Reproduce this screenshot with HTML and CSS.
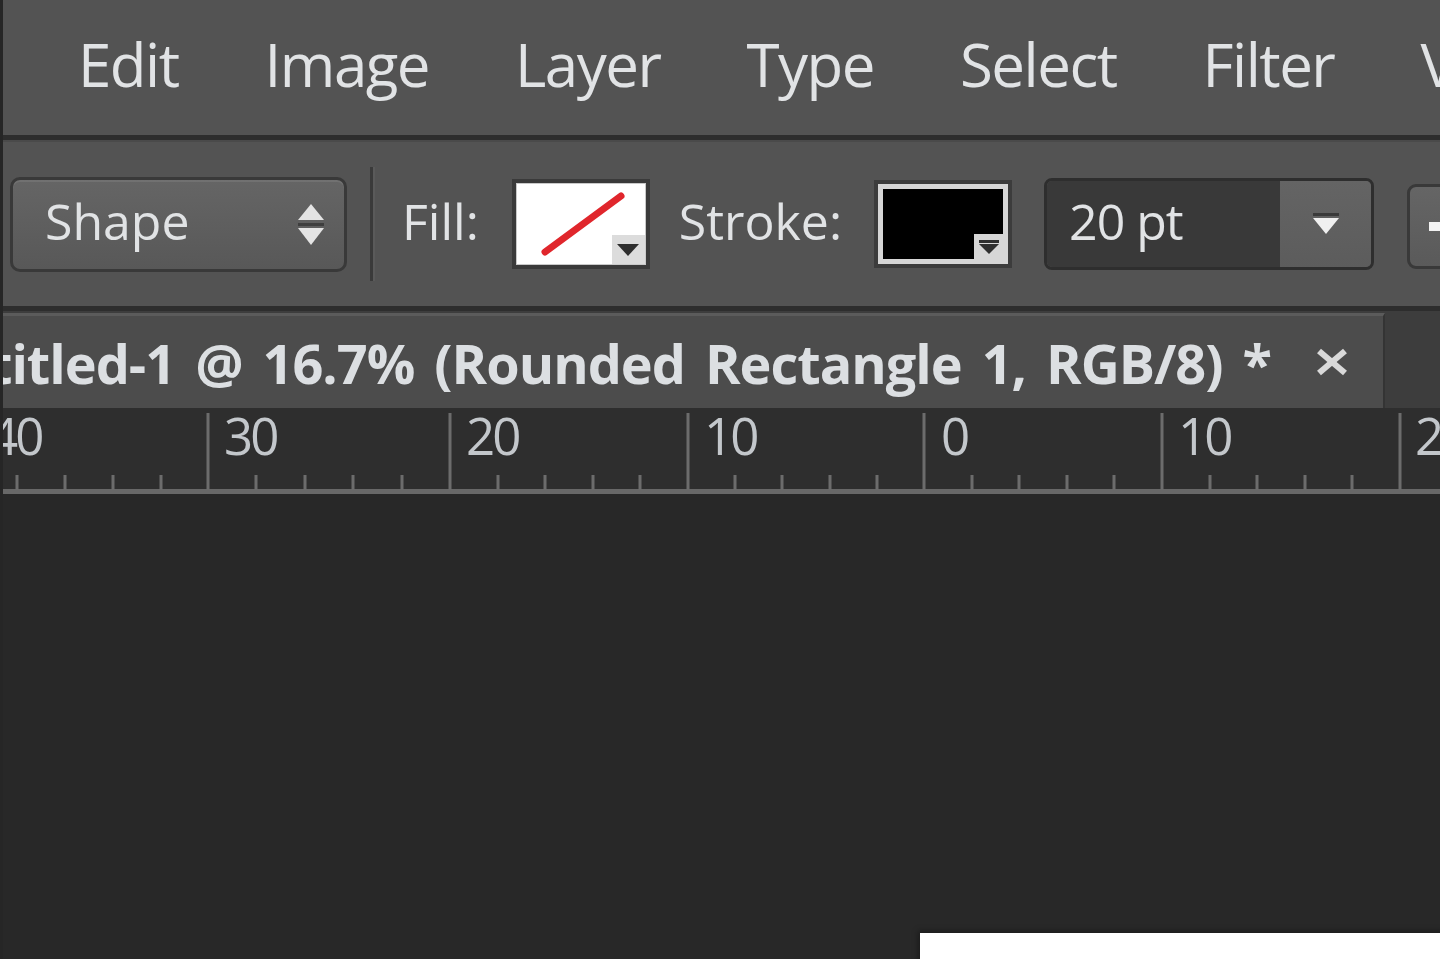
FILE: index.html
```html
<!DOCTYPE html>
<html lang="en">
<head>
<meta charset="utf-8">
<title>Photoshop</title>
<link rel="stylesheet" href="styles.css">
</head>
<body>
<div class="app">
  <nav class="menubar">
    <span class="menu-item">Edit</span>
    <span class="menu-item">Image</span>
    <span class="menu-item">Layer</span>
    <span class="menu-item">Type</span>
    <span class="menu-item">Select</span>
    <span class="menu-item">Filter</span>
    <span class="menu-item">View</span>
  </nav>

  <div class="options">
    <div class="select">
      <span class="select-label">Shape</span>
      <svg class="updown" width="28" height="46" viewBox="0 0 28 46">
        <polygon points="14,3 27,19 1,19" fill="#e4e4e4"/>
        <rect x="1" y="22" width="26" height="3" fill="#3e3e3e"/>
        <polygon points="1,27 27,27 14,44" fill="#e4e4e4"/>
      </svg>
    </div>
    <div class="vsep"></div>
    <span class="opt-label fill-label">Fill:</span>
    <div class="swatch-fill">
      <svg class="slash" width="130" height="82" viewBox="0 0 130 82">
        <line x1="29" y1="69" x2="105" y2="13" stroke="#e0262c" stroke-width="7" stroke-linecap="round"/>
      </svg>
      <span class="corner corner-fill">
        <svg width="22" height="12" viewBox="0 0 22 12"><polygon points="0,0 22,0 11,12" fill="#2e2e2e"/></svg>
      </span>
    </div>
    <span class="opt-label stroke-label">Stroke:</span>
    <div class="swatch-stroke">
      <div class="stroke-inner">
        <span class="corner corner-stroke">
          <svg width="20" height="14" viewBox="0 0 20 14"><rect x="0" y="0" width="20" height="3" fill="#2e2e2e"/><polygon points="0,4 20,4 10,14" fill="#2e2e2e"/></svg>
        </span>
      </div>
    </div>
    <div class="width-input">
      <span class="width-value">20 pt</span>
      <span class="width-btn">
        <svg width="28" height="22" viewBox="0 0 28 22"><rect x="1" y="0" width="26" height="3" fill="#3a3a3a"/><polygon points="1,5 27,5 14,21" fill="#f0f0f0"/></svg>
      </span>
    </div>
    <div class="next-btn"><span class="dash"></span></div>
  </div>

  <div class="tabbar">
    <div class="tab">
      <span class="tab-title">Untitled-1 @ 16.7% (Rounded Rectangle 1, RGB/8) *</span>
      <svg class="tab-close" width="36" height="32" viewBox="0 0 36 32">
        <line x1="5" y1="5" x2="31" y2="27" stroke="#d9d9d9" stroke-width="6"/>
        <line x1="31" y1="5" x2="5" y2="27" stroke="#d9d9d9" stroke-width="6"/>
      </svg>
    </div>
    <div class="tab-rest"></div>
  </div>

  <div class="ruler">
    <svg width="1440" height="86" viewBox="0 0 1440 86">
      <rect x="0" y="0" width="1440" height="86" fill="#2e2e2e"/>
      <rect x="0" y="81" width="1440" height="5" fill="#686868"/>
      <g stroke="#6c6c6c" stroke-width="3">
        <line x1="205" y1="5" x2="205" y2="82"/>
        <line x1="447" y1="5" x2="447" y2="82"/>
        <line x1="685" y1="5" x2="685" y2="82"/>
        <line x1="921" y1="5" x2="921" y2="82"/>
        <line x1="1159" y1="5" x2="1159" y2="82"/>
        <line x1="1397" y1="5" x2="1397" y2="82"/>
        <line x1="14" y1="67" x2="14" y2="82"/>
        <line x1="62" y1="67" x2="62" y2="82"/>
        <line x1="110" y1="67" x2="110" y2="82"/>
        <line x1="158" y1="67" x2="158" y2="82"/>
        <line x1="253" y1="67" x2="253" y2="82"/>
        <line x1="302" y1="67" x2="302" y2="82"/>
        <line x1="350" y1="67" x2="350" y2="82"/>
        <line x1="399" y1="67" x2="399" y2="82"/>
        <line x1="495" y1="67" x2="495" y2="82"/>
        <line x1="542" y1="67" x2="542" y2="82"/>
        <line x1="590" y1="67" x2="590" y2="82"/>
        <line x1="637" y1="67" x2="637" y2="82"/>
        <line x1="732" y1="67" x2="732" y2="82"/>
        <line x1="779" y1="67" x2="779" y2="82"/>
        <line x1="827" y1="67" x2="827" y2="82"/>
        <line x1="874" y1="67" x2="874" y2="82"/>
        <line x1="969" y1="67" x2="969" y2="82"/>
        <line x1="1016" y1="67" x2="1016" y2="82"/>
        <line x1="1064" y1="67" x2="1064" y2="82"/>
        <line x1="1111" y1="67" x2="1111" y2="82"/>
        <line x1="1207" y1="67" x2="1207" y2="82"/>
        <line x1="1254" y1="67" x2="1254" y2="82"/>
        <line x1="1302" y1="67" x2="1302" y2="82"/>
        <line x1="1349" y1="67" x2="1349" y2="82"/>
      </g>
      <g class="ruler-labels" fill="#c3c7cb">
        <text x="-14" y="47">40</text>
        <text x="221" y="47">30</text>
        <text x="463" y="47">20</text>
        <text x="701" y="47">10</text>
        <text x="938" y="47">0</text>
        <text x="1175" y="47">10</text>
        <text x="1412" y="47">20</text>
      </g>
    </svg>
  </div>

  <div class="canvas">
    <div class="document"></div>
  </div>
</div>
</body>
</html>
```

FILE: styles.css
```css
* {
  box-sizing: border-box;
  margin: 0;
  padding: 0;
}

html,
body {
  width: 1440px;
  height: 959px;
  overflow: hidden;
  background: #282828;
}

body {
  font-family: "Open Sans", "Noto Sans", sans-serif;
  color: #e1e3e5;
}

.app {
  display: flex;
  flex-direction: column;
  height: 959px;
  border-left: 3px solid #262626;
  overflow: hidden;
}

/* ---------- menu bar ---------- */
.menubar {
  flex: none;
  height: 140px;
  background: #535353;
  border-bottom: 5px solid #2d2d2d;
  display: flex;
  align-items: center;
  gap: 86px;
  padding-left: 75px;
  padding-bottom: 8px;
  font-size: 60px;
  letter-spacing: -1.5px;
  line-height: 1;
  white-space: nowrap;
  overflow: hidden;
}

.menu-item {
  flex: none;
}

/* ---------- options bar ---------- */
.options {
  flex: none;
  height: 171px;
  background: #535353;
  border-top: 2px solid #4a4a4a;
  border-bottom: 5px solid #2d2d2d;
  display: flex;
  align-items: center;
  padding-left: 7px;
  font-size: 50px;
  line-height: 1;
  white-space: nowrap;
  overflow: hidden;
}

.select {
  flex: none;
  width: 337px;
  height: 95px;
  border: 3px solid #393939;
  border-radius: 10px;
  background: linear-gradient(#656565, #585858);
  box-shadow: inset 0 2px 0 rgba(255, 255, 255, 0.08);
  display: flex;
  align-items: center;
  padding-left: 32px;
  padding-right: 19px;
}

.select-label {
  padding-bottom: 6px;
}

.updown {
  margin-left: auto;
}

.vsep {
  flex: none;
  width: 3px;
  height: 114px;
  background: #3a3a3a;
  box-shadow: 2px 0 0 #5a5a5a;
  margin-left: 23px;
}

.opt-label {
  flex: none;
  padding-bottom: 6px;
}

.fill-label {
  margin-left: 29px;
}

.swatch-fill {
  flex: none;
  position: relative;
  width: 138px;
  height: 90px;
  margin-left: 33px;
  border: 4px solid #3a3a3a;
  background: #ffffff;
  box-shadow: inset 0 0 0 1px #c9c9c9;
}

.slash {
  display: block;
}

.corner {
  position: absolute;
  right: 1px;
  bottom: 1px;
  display: flex;
  align-items: center;
  justify-content: center;
}

.corner-fill {
  width: 33px;
  height: 29px;
  background: #dcdcdc;
}

.stroke-label {
  margin-left: 29px;
}

.swatch-stroke {
  flex: none;
  width: 138px;
  height: 88px;
  margin-left: 32px;
  border: 4px solid #3c3c3c;
  background: #d6d6d6;
  padding: 5px;
}

.stroke-inner {
  position: relative;
  width: 100%;
  height: 100%;
  background: #000000;
}

.corner-stroke {
  right: 0;
  bottom: 0;
  width: 29px;
  height: 25px;
  background: #d6d6d6;
}

.width-input {
  flex: none;
  display: flex;
  width: 330px;
  height: 92px;
  margin-left: 32px;
  border: 3px solid #2e2e2e;
  border-radius: 8px;
  overflow: hidden;
}

.width-value {
  flex: 1;
  display: flex;
  align-items: center;
  padding-left: 22px;
  padding-bottom: 6px;
  background: #393939;
  letter-spacing: -1px;
}

.width-btn {
  flex: none;
  width: 91px;
  background: linear-gradient(#646464, #5c5c5c);
  display: flex;
  align-items: center;
  justify-content: center;
}

.next-btn {
  flex: none;
  width: 120px;
  height: 85px;
  margin-left: 33px;
  margin-top: 4px;
  border: 3px solid #393939;
  border-radius: 9px;
  background: linear-gradient(#656565, #5a5a5a);
  display: flex;
  align-items: center;
  padding-left: 19px;
}

.dash {
  width: 14px;
  height: 9px;
  background: #f2f2f2;
}

/* ---------- document tab bar ---------- */
.tabbar {
  flex: none;
  height: 97px;
  background: #3d3d3d;
  display: flex;
}

.tab {
  flex: none;
  width: 1382px;
  margin-top: 2px;
  border-top: 3px solid #5b5b5b;
  border-right: 2px solid #343434;
  background: #4c4c4c;
  display: flex;
  align-items: center;
  justify-content: flex-end;
  overflow: hidden;
  white-space: nowrap;
  padding-right: 33px;
}

.tab-title {
  flex: none;
  font-size: 54px;
  font-weight: 700;
  line-height: 1;
  color: #dcdfe2;
  letter-spacing: -1px;
  word-spacing: 7px;
  padding-top: 2px;
}

.tab-close {
  flex: none;
  margin-left: 43px;
}

.tab-rest {
  flex: 1;
}

/* ---------- ruler ---------- */
.ruler {
  flex: none;
  height: 86px;
}

.ruler svg {
  display: block;
}

.ruler-labels text {
  font-family: "Open Sans", "Noto Sans", sans-serif;
  font-size: 51px;
  letter-spacing: -3px;
}

/* ---------- canvas ---------- */
.canvas {
  flex: 1;
  background: #282828;
  display: flex;
  padding-top: 439px;
  padding-left: 917px;
  overflow: hidden;
}

.document {
  flex: none;
  width: 600px;
  height: 200px;
  background: #ffffff;
  box-shadow: 0 0 6px 2px rgba(0, 0, 0, 0.35);
}
```
